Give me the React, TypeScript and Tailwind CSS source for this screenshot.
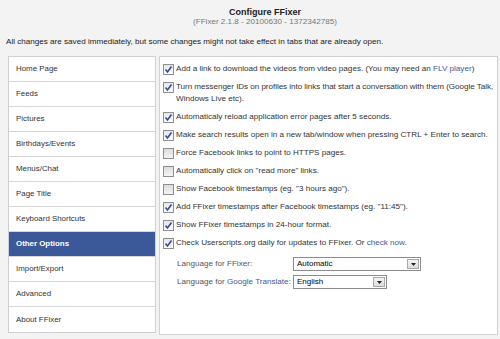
import React from "react";

type Option = {
  checked: boolean;
  text: React.ReactNode;
};

const tabs = [
  "Home Page",
  "Feeds",
  "Pictures",
  "Birthdays/Events",
  "Menus/Chat",
  "Page Title",
  "Keyboard Shortcuts",
  "Other Options",
  "Import/Export",
  "Advanced",
  "About FFixer",
];

const link = "text-[#3b5998]";

const options: Option[] = [
  {
    checked: true,
    text: (
      <>
        Add a link to download the videos from video pages. (You may need an <span className={link}>FLV player</span>)
      </>
    ),
  },
  {
    checked: true,
    text: (
      <>
        <span className="whitespace-nowrap tracking-[-0.05px]">
          Turn messenger IDs on profiles into links that start a conversation with them (Google Talk,
        </span>
        <br />
        Windows Live etc).
      </>
    ),
  },
  { checked: true, text: "Automaticaly reload application error pages after 5 seconds." },
  {
    checked: true,
    text: "Make search results open in a new tab/window when pressing CTRL + Enter to search.",
  },
  { checked: false, text: "Force Facebook links to point to HTTPS pages." },
  { checked: false, text: 'Automatically click on "read more" links.' },
  { checked: false, text: 'Show Facebook timestamps (eg. "3 hours ago").' },
  { checked: true, text: 'Add FFixer timestamps after Facebook timestamps (eg. "11:45").' },
  { checked: true, text: "Show FFixer timestamps in 24-hour format." },
  {
    checked: true,
    text: (
      <>
        Check Userscripts.org daily for updates to FFixer. Or <span className={link}>check now</span>.
      </>
    ),
  },
];

function Checkbox({ checked }: { checked: boolean }) {
  return (
    <span
      className={
        "mt-[1px] flex h-[11px] w-[11px] shrink-0 items-center justify-center border border-[#8f8f8f] " +
        (checked ? "bg-[linear-gradient(#e6e6e6,#ffffff)]" : "bg-[linear-gradient(#dcdcdc,#f4f4f4)]")
      }
    >
      {checked ? (
        <svg width="9" height="9" viewBox="0 0 9 9">
          <path d="M1.5 4.5 L3.5 7 L7.5 1.5" fill="none" stroke="#2b4ea0" strokeWidth="1.6" />
        </svg>
      ) : null}
    </span>
  );
}

function Select({ value, width }: { value: string; width: string }) {
  return (
    <div className={`flex h-[14px] items-center justify-between border border-[#8c8c8c] bg-white pl-[3px] pr-[1px] ${width}`}>
      <span className="text-[8px] leading-none text-black">{value}</span>
      <span className="flex h-[10px] w-[12px] items-center justify-center border border-[#a8a8a8] bg-[linear-gradient(#f4f4f4,#dcdcdc)]">
        <svg width="5" height="3" viewBox="0 0 5 3">
          <path d="M0 0 H5 L2.5 3 Z" fill="#222" />
        </svg>
      </span>
    </div>
  );
}

export default function App() {
  return (
    <div className="h-[339px] w-[500px] overflow-hidden bg-[#f3f3f3] font-['Liberation_Sans',Arial,sans-serif] text-[8.1px] text-[#333]">
      <div className="pl-[30px] pt-[7px] text-center">
        <p className="text-[9px] font-bold leading-[10px] text-[#222]">Configure FFixer</p>
        <p className="leading-[10px] text-[#777]">(FFixer 2.1.8 - 20100630 - 1372342785)</p>
      </div>
      <p className="mt-[9px] pl-[6px] leading-[11px] text-[#222]">
        All changes are saved immediately, but some changes might not take effect in tabs that are already open.
      </p>

      <div className="ml-[8px] mt-[9px] flex h-[279px] w-[490px] gap-[3px]">
        <div className="w-[148px] shrink-0 self-start border border-[#d0d0d0] bg-white">
          {tabs.map((t) => {
            const active = t === "Other Options";
            return (
              <div
                key={t}
                className={
                  "flex h-[25px] items-center border-b border-[#d6d6d6] pl-[7px] text-[7.9px] last:border-b-0 " +
                  (active ? "bg-[#3b5998] font-bold text-white" : "text-[#333]")
                }
              >
                {t}
              </div>
            );
          })}
        </div>

        <div className="min-w-0 flex-1 overflow-hidden border border-[#d0d0d0] bg-white pl-[3px] pr-[2px] pt-[6px]">
          <div className="flex flex-col gap-[6px]">
            {options.map((o, i) => (
              <div key={i} className="flex gap-[2px]">
                <Checkbox checked={o.checked} />
                <span className="leading-[12px] text-[#333]">{o.text}</span>
              </div>
            ))}
          </div>

          <div className="mt-[8px] flex flex-col gap-[4px] pl-[14px]">
            <div className="flex items-center">
              <span className="w-[116px] whitespace-nowrap text-[#555]">Language for FFixer:</span>
              <Select value="Automatic" width="w-[128px]" />
            </div>
            <div className="flex items-center">
              <span className="w-[116px] whitespace-nowrap text-[#555]">
                Language for <span className={link}>Google Translate</span>:
              </span>
              <Select value="English" width="w-[94px]" />
            </div>
          </div>
        </div>
      </div>
    </div>
  );
}
